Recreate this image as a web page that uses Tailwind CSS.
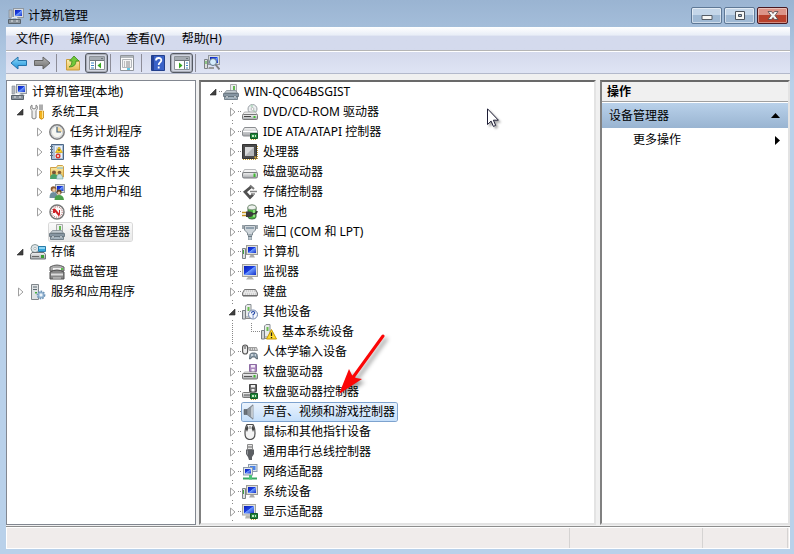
<!DOCTYPE html>
<html lang="zh-CN">
<head>
  <meta charset="UTF-8" />
  <meta name="viewport" content="width=device-width, initial-scale=1.0" />
  <title>计算机管理</title>
  <script src="https://cdn.jsdelivr.net/npm/@tailwindcss/browser@4"></script>
</head>

<body class="h-screen overflow-hidden flex flex-col pl-[6px] pr-1 pb-[5px] bg-[#b9d1ea] bg-linear-to-b from-[#9ab4d2] from-0% to-[#b9d1ea] to-15% font-['Noto_Sans','Noto_Sans_CJK_SC',sans-serif] text-xs text-black">

  <!-- Icons -->
  <svg class="absolute size-0" aria-hidden="true" xmlns="http://www.w3.org/2000/svg">
    <defs>
      <linearGradient id="gScreen" x1="0" y1="0" x2="1" y2="1">
        <stop offset="0" stop-color="#0a1fb8" /><stop offset=".45" stop-color="#1c3fe0" /><stop offset=".5" stop-color="#6f9bff" /><stop offset="1" stop-color="#1330c8" />
      </linearGradient>
      <linearGradient id="gMetal" x1="0" y1="0" x2="0" y2="1">
        <stop offset="0" stop-color="#f4f4f4" /><stop offset="1" stop-color="#a4a7aa" />
      </linearGradient>
      <linearGradient id="gBlue" x1="0" y1="0" x2="0" y2="1">
        <stop offset="0" stop-color="#8fdcfb" /><stop offset="1" stop-color="#1c8fd8" />
      </linearGradient>
      <linearGradient id="gGray" x1="0" y1="0" x2="0" y2="1">
        <stop offset="0" stop-color="#b4b4b4" /><stop offset="1" stop-color="#6f6f6f" />
      </linearGradient>
      <linearGradient id="gFolder" x1="0" y1="0" x2="0" y2="1">
        <stop offset="0" stop-color="#fdf0b0" /><stop offset="1" stop-color="#e8bd55" />
      </linearGradient>
    </defs>

    <!-- tree expanders, with the dotted guide lines of the device tree -->
    <symbol id="exp-closed" viewBox="0 0 19 20"><path d="M7.500 6v8l4.500-4z" fill="#fff" stroke="#a0a0a0" /></symbol>
    <symbol id="exp-open" viewBox="0 0 19 20"><path d="M12 7v6H6z" fill="#404040" stroke="#262626" stroke-width=".6" /></symbol>
    <symbol id="dots-closed" viewBox="0 0 19 20"><path d="M9 1h1v1H9zM9 18h1v1H9zM15 9h1v1h-1zM17 9h1v1h-1z" fill="#888" /><use href="#exp-closed" width="19" height="20" /></symbol>
    <symbol id="dots-open" viewBox="0 0 19 20"><path d="M9 1h1v1H9zM9 18h1v1H9zM15 9h1v1h-1zM17 9h1v1h-1z" fill="#888" /><use href="#exp-open" width="19" height="20" /></symbol>
    <symbol id="dots-root" viewBox="0 0 19 20"><path d="M15 9h1v1h-1zM17 9h1v1h-1z" fill="#888" /><use href="#exp-open" width="19" height="20" /></symbol>
    <symbol id="dots-leaf" viewBox="0 0 38 20"><path d="M9.500 1v19M28.500 1v9M28 9.500h10" fill="none" stroke="#888" stroke-dasharray="1 1" /></symbol>

    <symbol id="i-mgmt" viewBox="0 0 16 16">
      <rect x="5.500" y=".5" width="10" height="9" fill="#d9dde2" stroke="#9098a0" />
      <rect x="7" y="2" width="7" height="6" fill="url(#gScreen)" />
      <path d="M1 2h3v8H1z" fill="#b5bbc2" stroke="#7f868e" stroke-width=".6" />
      <path d="M9 10h3l2 2H7z" fill="#aab0b8" />
      <path d="M.5 11.500h12v4H.5z" fill="#8c959d" stroke="#59636c" />
      <path d="M4 11V9.500h5V11M3 13h2m3 0h2" fill="none" stroke="#e4e8eb" />
    </symbol>
    <symbol id="i-tools" viewBox="0 0 16 16">
      <path d="M2 1v3l2 1 2-1V1c2 1 2 4 0 5.500V14q-2 2-4 0V6.500C0 5 0 2 2 1z" fill="#eee" stroke="#777" stroke-width=".9" />
      <path d="M10 .5V6M12 .5V6" stroke="#777" stroke-width="1.200" />
      <path d="M9.500 7h4v7q-2 2.500-4 0z" fill="#f4b31c" stroke="#bd7d0b" stroke-width=".7" />
      <path d="M12.500 7v7" stroke="#ffe48a" />
    </symbol>
    <symbol id="i-clock" viewBox="0 0 16 16">
      <circle cx="8" cy="8" r="7.200" fill="#e6ecf2" stroke="#7d7d7d" stroke-width="1.500" />
      <circle cx="8" cy="8" r="5.600" fill="#f6f7f2" stroke="#b9b9b9" stroke-width=".6" />
      <path d="M8 8V3a5 5 0 0 1 5 5z" fill="#f3d9a0" />
      <path d="M8 3v5h4" fill="none" stroke="#41617f" stroke-width="1.200" />
    </symbol>
    <symbol id="i-log" viewBox="0 0 16 16">
      <path d="M2.500.5h12v15h-12z" fill="#a9bfd8" stroke="#4d6786" />
      <path d="M6 2h7v12H6z" fill="#eef3f8" />
      <path d="M7 4h5M7 6h5M7 8h5M7 10h5" stroke="#8ea5c0" stroke-width=".7" />
      <path d="M1 2.500h3M1 5.500h3M1 8.500h3M1 11.500h3" stroke="#5c6e80" />
      <path d="M10 3l3.500 5.500h-7z" fill="#ffd21e" stroke="#c49200" stroke-width=".6" /><path d="M10 5v2" stroke="#333" />
      <circle cx="9" cy="12" r="2.500" fill="#d8362c" /><path d="M8 11l2 2m0-2l-2 2" stroke="#fff" stroke-width=".7" />
    </symbol>
    <symbol id="i-share" viewBox="0 0 16 16">
      <path d="M1.500 3.500V13h13V2.500l-1-1h-5l-1 2z" fill="url(#gFolder)" stroke="#cfa146" />
      <path d="M8 4h6" stroke="#6eb4df" />
      <circle cx="5" cy="8.500" r="2" fill="#7b5536" /><path d="M1 15q0-5 4-5t4 5z" fill="#49a069" />
      <circle cx="10.500" cy="8.500" r="1.800" fill="#8a6038" /><path d="M7.500 15q0-5 3-5t3.500 5z" fill="#c8e2e4" stroke="#59928f" stroke-width=".5" />
    </symbol>
    <symbol id="i-users" viewBox="0 0 16 16">
      <rect x="6.500" y=".5" width="9" height="8" fill="#d9dde2" stroke="#9098a0" />
      <rect x="8" y="2" width="6.500" height="5" fill="url(#gScreen)" />
      <circle cx="4.500" cy="5" r="2.800" fill="#8a5a30" /><circle cx="5" cy="6" r="1.700" fill="#f0c8a0" />
      <path d="M.5 14q0-6 4-6t4 6z" fill="#6e8e9d" />
      <circle cx="10" cy="8" r="2.600" fill="#60401f" /><circle cx="10" cy="9" r="1.600" fill="#f0c8a0" />
      <path d="M5.500 16q0-5 4.500-5t5 5z" fill="#4aa04a" />
    </symbol>
    <symbol id="i-perf" viewBox="0 0 16 16">
      <circle cx="8" cy="8" r="7" fill="#fbfbfb" stroke="#777" stroke-width="1.500" />
      <circle cx="8" cy="8" r="5.200" fill="none" stroke="#a03030" stroke-width=".8" stroke-dasharray="1 1" />
      <path d="M5 5v4M5 5l5.500 6.500" fill="none" stroke="#cf1f25" stroke-width="2" /><path d="M10.500 6v4" stroke="#cf1f25" />
    </symbol>
    <symbol id="i-devmgr" viewBox="0 0 16 16">
      <path d="M7.500.5h6v9h-6z" fill="#eceeee" stroke="#aaa" />
      <path d="M10 2h2v4h-2z" fill="#65b952" />
      <path d="M1.500 9l2-2.500h9l2 2.500z" fill="#c4ccd2" stroke="#77828a" stroke-width=".7" />
      <path d="M.5 9.500h15v3H.5z" fill="#8796a2" stroke="#5f6d77" stroke-width=".8" />
      <path d="M1.500 12.500h13v3h-13z" fill="#a5b4bf" stroke="#5f6d77" stroke-width=".8" />
      <path d="M3 12h2v2H3zM11 12h2v2h-2z" fill="#e6ecef" stroke="#59656e" stroke-width=".4" />
    </symbol>
    <symbol id="i-storage" viewBox="0 0 16 16">
      <circle cx="5" cy="4.500" r="4" fill="#dfe6ea" stroke="#899" /><circle cx="5" cy="4.500" r="1.200" fill="#fff" stroke="#899" stroke-width=".6" />
      <path d="M8.500 2.500h7v5h-7z" fill="#36a8dd" stroke="#277ba8" /><path d="M9 3h6v2H9z" fill="#8cd3f3" />
      <path d="M.5 10.500l1.500-2h12l1.500 2V15H.5z" fill="url(#gMetal)" stroke="#6f7478" />
      <path d="M11 11h3v3h-3z" fill="#39a035" /><path d="M2 12.500h7" stroke="#666" />
    </symbol>
    <symbol id="i-disk" viewBox="0 0 16 16">
      <path d="M1 3q7-4 14 0v4H1z" fill="#aaa" stroke="#606060" /><path d="M4 5h8" stroke="#eee" stroke-width="2" />
      <path d="M1 8q7-4 14 0v7H1z" fill="#888" stroke="#505050" /><path d="M2 10.500h12" stroke="#ddd" stroke-width="2" />
      <path d="M12 4h2v2h-2z" fill="#5bc24c" /><path d="M4 14h8" stroke="#d5d5d5" />
    </symbol>
    <symbol id="i-services" viewBox="0 0 16 16">
      <path d="M1.500.5h7v15h-7z" fill="#dfe2e4" stroke="#81878c" />
      <path d="M3 3h4M3 5.500h4" stroke="#5c6a72" /><path d="M5 8h2v1.500H5z" fill="#44ac3e" />
      <circle cx="11" cy="11" r="3.500" fill="#aac7e0" stroke="#6e94b7" stroke-width="1.800" stroke-dasharray="1.600 1" />
      <circle cx="11" cy="11" r="2.600" fill="#bcd4e8" stroke="#6e94b7" stroke-width=".6" /><circle cx="11" cy="11" r="1" fill="#fff" />
    </symbol>
    <symbol id="i-drive" viewBox="0 0 16 16">
      <path d="M.5 9l2-3.500h11L15.500 9z" fill="#f3f3f3" stroke="#a9abad" stroke-width=".8" />
      <rect x=".5" y="8.500" width="15" height="5.500" rx="1.500" fill="url(#gMetal)" stroke="#7a7d80" />
      <path d="M11.500 9.500h2v3.500h-2z" fill="#3fba31" />
    </symbol>
    <symbol id="i-dvd" viewBox="0 0 16 16">
      <circle cx="10.500" cy="5" r="4.500" fill="#eceff1" stroke="#9aa0a5" />
      <path d="M10.500 5L8 1.500l3-1zM10.500 5l3.500 2-2 2z" fill="#b9d9c4" /><circle cx="10.500" cy="5" r="1.400" fill="#fff" stroke="#999" stroke-width=".6" />
      <path d="M.5 11l2-3h11l2 3z" fill="#ededed" stroke="#999" stroke-width=".7" />
      <rect x=".5" y="10.500" width="15" height="5" rx="1" fill="url(#gMetal)" stroke="#777" />
      <path d="M2 12.500h7" stroke="#444" /><path d="M11.500 12h2v2h-2z" fill="#3fba31" />
    </symbol>
    <symbol id="i-chip" viewBox="0 0 16 16">
      <path d="M8.500 9.500h7v5h-7z" fill="#23873b" stroke="#125a25" /><path d="M10 11h2v2h-2zM13 11h1v2h-1z" fill="#c3e8c5" /><path d="M9 15.500h6" stroke="#c9a82d" stroke-dasharray="1 1" />
    </symbol>
    <symbol id="i-ide" viewBox="0 0 16 16">
      <path d="M.5 7l2-3.500h11l2 3.500v4q0 1-1.500 1H2q-1.500 0-1.500-1z" fill="url(#gMetal)" stroke="#8a8d90" /><path d="M1 7.500h14" stroke="#fff" />
      <use href="#i-chip" width="16" height="16" />
    </symbol>
    <symbol id="i-cpu" viewBox="0 0 16 16">
      <path d="M1 15.300h14M15.300 2v13" stroke="#c29a2b" stroke-width="1.400" stroke-dasharray="1 1" />
      <path d="M.5.500h14v14H.5z" fill="#4a4a4a" stroke="#333" /><path d="M3 3h9v9H3z" fill="#b5b7b9" /><path d="M3 3h9l-9 9z" fill="#d9dadb" />
      <path d="M12.500 12.500h2v2h-2z" fill="#d9a72d" />
    </symbol>
    <symbol id="i-ctrl" viewBox="0 0 16 16">
      <path d="M9.500 2.500L3 8l5 5.500 3-3" fill="none" stroke="#505050" stroke-width="2.800" />
      <path d="M8 1.500l4 3.500" stroke="#777" stroke-width="2" /><path d="M8 7.500h7M9 10h4" stroke="#858585" stroke-width="1.500" />
    </symbol>
    <symbol id="i-battery" viewBox="0 0 16 16">
      <path d="M6 3q0-2 4-2t4 2v10q0 2-4 2t-4-2z" fill="#48b83d" stroke="#456b45" />
      <path d="M6 3q0-2 4-2t4 2v2q-4 1.500-8 0z" fill="#edf2ed" stroke="#7c8b7c" stroke-width=".7" /><path d="M12 6v7" stroke="#a7ee93" stroke-width="1.500" />
      <path d="M4 7.500h4q3 0 3 2.500t-3 3H4z" fill="#3c3c3c" /><path d="M0 8.500h4M0 11.500h4" stroke="#c39322" stroke-width="1.500" /><path d="M10 10q5 0 5-3" fill="none" stroke="#333" stroke-width="1.500" />
    </symbol>
    <symbol id="i-port" viewBox="0 0 16 16">
      <path d="M2.500 1.500h11V6l-3 3v2h-5V9l-3-3z" fill="#ced5da" stroke="#7f8a92" /><path d="M4 3h8v2H4z" fill="#8fa0ad" />
      <path d="M1 1v4M15 1v4" stroke="#7f8a92" stroke-width="1.500" /><path d="M6.500 11h3v5h-3z" fill="#bcc6cd" stroke="#84929b" stroke-width=".7" /><path d="M6 12.500h4" stroke="#6c7a84" />
    </symbol>
    <symbol id="i-computer" viewBox="0 0 16 16">
      <path d="M.5 4.500h3v10h-3z" fill="#dde0e2" stroke="#7c8286" /><path d="M1.500 6v4" stroke="#44a43d" />
      <rect x="4.500" y="1.500" width="11" height="9" fill="#dfdfdb" stroke="#9c9c98" /><rect x="6" y="3" width="8" height="6" fill="url(#gScreen)" />
      <path d="M8.500 11h3l1.500 2.500H7z" fill="#aaa" />
    </symbol>
    <symbol id="i-monitor" viewBox="0 0 16 16">
      <rect x=".5" y=".5" width="15" height="12" fill="#e1e1dc" stroke="#a5a5a0" /><rect x="2" y="2" width="12" height="9" fill="url(#gScreen)" />
      <path d="M6 13h4l2 2.500H4z" fill="#b5b5b0" />
    </symbol>
    <symbol id="i-keyboard" viewBox="0 0 16 16">
      <path d="M2.500 5.500h11l2 3.500v2.500H.5V9z" fill="#cfcfcf" stroke="#777" stroke-linejoin="round" />
      <path d="M3 7h10M2.500 8.500h11M2 10h12" stroke="#fff" stroke-dasharray="1 1" /><path d="M1 12h14" stroke="#666" />
    </symbol>
    <symbol id="i-box" viewBox="0 0 16 16">
      <path d="M3.500 2l1.500-1.500h4V13H3.500z" fill="#e9ebec" stroke="#888e92" /><path d="M5.500 3h2v4h-2z" fill="#69bd50" />
      <path d="M.5 6.500h3V15h-3z" fill="#cfd3d6" stroke="#777d82" /><path d="M3 14.500h7" stroke="#888" />
    </symbol>
    <symbol id="i-other" viewBox="0 0 16 16">
      <use href="#i-box" width="16" height="16" />
      <circle cx="11" cy="10.500" r="4.500" fill="#f5f8fd" stroke="#6d82ab" /><path d="M9.500 9.200q0-1.700 1.600-1.700t1.500 1.500q0 .8-1.500 1.600v1m0 1v1" fill="none" stroke="#2549a8" stroke-width="1.200" />
    </symbol>
    <symbol id="i-warn" viewBox="0 0 16 16">
      <use href="#i-box" width="16" height="16" />
      <path d="M10.500 5.500L15.500 15h-10z" fill="#ffdc2e" stroke="#c79a08" stroke-linejoin="round" /><path d="M10.500 8.500v3.500m0 1v1.200" stroke="#222" stroke-width="1.300" />
    </symbol>
    <symbol id="i-hid" viewBox="0 0 16 16">
      <rect x=".6" y="1" width="5" height="9" rx="2.500" fill="#eee" stroke="#555" stroke-width="1.200" /><path d="M3 2v3" stroke="#444" />
      <path d="M6.500 3.500h8l1 3h-8z" fill="#d8d8d8" stroke="#888" stroke-width=".8" /><path d="M8 5h6" stroke="#666" stroke-dasharray="1 1" />
      <path d="M7.500 15q0-6 2-6h4q2 0 2 6-2 0-2.500-2h-3q-.5 2-2.500 2z" fill="#8fa1af" stroke="#47555f" stroke-width=".8" /><path d="M9 11h2m2 0h1" stroke="#fff" />
    </symbol>
    <symbol id="i-floppy" viewBox="0 0 16 16">
      <path d="M7.500.5h7v7h-7z" fill="#a987bd" stroke="#8c6ba3" /><path d="M9 1h4v2.500H9zM9.500 5h3v2.500h-3z" fill="#f2eaf6" />
      <path d="M.5 11l2-3h11l2 3z" fill="#ededed" stroke="#999" stroke-width=".7" />
      <rect x=".5" y="9.500" width="15" height="5.500" rx="1" fill="url(#gMetal)" stroke="#777" /><path d="M2 12.500h8" stroke="#555" /><path d="M11.500 11h2v2.500h-2z" fill="#3fba31" />
    </symbol>
    <symbol id="i-floppyctl" viewBox="0 0 16 16">
      <path d="M7.500.5h7v7h-7z" fill="#6c6c6c" stroke="#444" /><path d="M9 1h4v2.500H9zM9.500 5h3v2.500h-3z" fill="#eee" />
      <rect x=".5" y="8.500" width="14" height="5" rx="1" fill="url(#gMetal)" stroke="#777" /><path d="M2 11h6" stroke="#555" />
      <use href="#i-chip" width="16" height="16" />
    </symbol>
    <symbol id="i-sound" viewBox="0 0 16 16">
      <path d="M2 5.500h3v5H2z" fill="#6c7379" stroke="#555c62" stroke-width=".6" /><path d="M5 5.500L11 .8v14.400L5 10.500z" fill="#8d959c" stroke="#646c73" stroke-width=".6" />
      <path d="M9 3.500l2-2v13l-2-2z" fill="#c2c9cf" />
    </symbol>
    <symbol id="i-mouse" viewBox="0 0 16 16">
      <path d="M5 .5h6q2 3 2 9 0 6-5 6t-5-6q0-6 2-9z" fill="#f3f3f3" stroke="#4d4d4d" stroke-width="1.200" />
      <path d="M3.700 5L5 1l1.500 3L5 8zM12.300 5L11 1 9.500 4 11 8z" fill="#444" /><path d="M7.500 2h1v3h-1z" fill="#777" />
    </symbol>
    <symbol id="i-usb" viewBox="0 0 16 16">
      <path d="M5.500.5h5v5h-5z" fill="#e4e4e4" stroke="#8a8a8a" /><path d="M7 2v2M9 2v2" stroke="#666" />
      <path d="M4 5.500h8V10l-2 3v3H7l-1-3-2-3z" fill="#5c5f63" /><path d="M5.500 6.500v4" stroke="#96999c" />
    </symbol>
    <symbol id="i-net" viewBox="0 0 16 16">
      <rect x="6.500" y=".5" width="8.500" height="7" fill="#dde6ef" stroke="#8c9bab" /><rect x="8" y="2" width="5.500" height="4" fill="#4a83ea" />
      <rect x="1.500" y="3.500" width="9" height="7.500" fill="#e3e6e8" stroke="#8c9bab" /><rect x="3" y="5" width="6" height="4.500" fill="url(#gScreen)" />
      <path d="M1 14.500h14" stroke="#38a862" stroke-width="2" /><path d="M7 11h3v4.500H7z" fill="#4cc478" />
    </symbol>
    <symbol id="i-display" viewBox="0 0 16 16">
      <rect x=".5" y=".5" width="13" height="10.500" fill="#e1e1dc" stroke="#a5a5a0" /><rect x="2" y="2" width="10" height="7.500" fill="url(#gScreen)" />
      <path d="M4 11.500h4v3H3z" fill="#b5b5b0" /><use href="#i-chip" width="16" height="16" />
    </symbol>
  </svg>

  <!-- Title bar -->
  <header class="h-[27px] shrink-0 flex items-center pr-[2px]">
    <svg class="size-4 ml-[2px] mt-1"><use href="#i-mgmt" /></svg>
    <h1 class="ml-1 mt-1 flex-1">计算机管理</h1>
    <div class="flex gap-[2px] mt-1">
      <button aria-label="最小化" class="w-[31px] h-[17px] rounded-[2px] border border-[#5e7896] inset-ring inset-ring-white/50 bg-linear-to-b from-[#c4d6e9] from-50% to-[#9fb9d4] to-50% flex items-center justify-center">
        <svg class="w-3 h-3" viewBox="0 0 12 12"><path d="M1 5.500h10v4H1z" fill="#f7f7f5" stroke="#565d66" /></svg>
      </button>
      <button aria-label="最大化" class="w-[31px] h-[17px] rounded-[2px] border border-[#5e7896] inset-ring inset-ring-white/50 bg-linear-to-b from-[#c4d6e9] from-50% to-[#9fb9d4] to-50% flex items-center justify-center">
        <svg class="w-3 h-3" viewBox="0 0 12 12"><path fill-rule="evenodd" d="M1.500 1.500h9v8h-9zM4.500 4.500v2h3v-2z" fill="#f7f7f5" stroke="#4b525b" /></svg>
      </button>
      <button aria-label="关闭" class="w-[31px] h-[17px] rounded-[2px] border border-[#481820] inset-ring inset-ring-white/40 bg-linear-to-b from-[#dc9488] from-50% to-[#b8412c] to-50% flex items-center justify-center">
        <svg class="w-3 h-3" viewBox="0 0 12 12"><path d="M1 1.500h3.500L6 3.500l1.500-2H11L8 5.500l3 4H7.500L6 7.500l-1.500 2H1l3-4z" fill="#f7f7f5" stroke="#51464a" stroke-width=".8" /></svg>
      </button>
    </div>
  </header>

  <div class="flex-1 min-h-0 flex flex-col bg-[#f0f0f0]">
    <nav class="h-6 shrink-0 flex items-center pl-[2px] gap-px border-b border-[#b5b5b5] bg-linear-to-b from-white from-0% via-[#e9eef7] via-35% to-[#d4daed] to-40%">
      <button class="px-2">文件(F)</button>
      <button class="px-2">操作(A)</button>
      <button class="px-2">查看(V)</button>
      <button class="px-2">帮助(H)</button>
    </nav>

    <!-- Toolbar -->
    <div class="h-[23px] shrink-0 flex items-center pl-1 border-t border-t-white border-b border-b-[#b3b9cb] bg-linear-to-b from-[#d4d9ec] to-[#dfe4f4]">
      <button aria-label="后退" class="mr-[5px]"><svg class="w-[18px] h-4" viewBox="0 0 18 16"><path d="M1 8l7-6v3.500h8.500v5H8V14z" fill="url(#gBlue)" stroke="#2371aa" stroke-linejoin="round" /></svg></button>
      <button aria-label="前进" class="mr-[5px]"><svg class="w-[18px] h-4" viewBox="0 0 18 16"><path d="M17 8l-7-6v3.500H1.500v5H10V14z" fill="url(#gGray)" stroke="#656565" stroke-linejoin="round" /></svg></button>
      <span class="w-px h-[18px] bg-[#8d8d98] mr-2"></span>
      <button aria-label="向上一级" class="mr-1"><svg class="size-4" viewBox="0 0 16 16"><path d="M1.500 4.500h5l1 1.500h7v9h-13z" fill="url(#gFolder)" stroke="#c99c3d" /><path d="M4 12q3-1 3-6H4.500L9 1l5 5h-3q0 6-7 6z" fill="#72c83b" stroke="#3d8a1d" stroke-width=".8" /></svg></button>
      <button aria-label="显示/隐藏控制台树" aria-pressed="true" class="w-[23px] h-5 mr-[2px] rounded-[3px] border border-[#555a63] inset-ring inset-ring-[#a9adb8] bg-[#d1d5e0] flex items-center justify-center">
        <svg class="size-4" viewBox="0 0 16 16"><path d="M.5 1.500h15v13H.5z" fill="#fff" stroke="#8d9298" /><path d="M1 2h14v3H1z" fill="#a5abb2" /><path d="M12 3.500h2M1 5.500h14M6.500 6v8" stroke="#6e757c" /><path d="M2 8h3M2 10.500h3M2 13h3" stroke="#3d82c5" /><path d="M12 7.500v6L8.500 10.500z" fill="#35a81f" /></svg>
      </button>
      <span class="w-px h-[18px] bg-[#8d8d98] mr-2"></span>
      <button aria-label="属性" class="mr-[6px]"><svg class="size-4" viewBox="0 0 16 16"><path d="M1.500.5h13v15h-13z" fill="#fcfcfc" stroke="#8f949a" /><path d="M2 2h12" stroke="#b2b7bc" stroke-width="2" /><path d="M3.500 4.500h9v8h-9z" fill="#f4f4f4" stroke="#b3b6ba" /><path d="M5 7h1m1 0h4M5 9h1m1 0h4M5 11h1m1 0h4" stroke="#888" /><path d="M8 14h3" stroke="#32b5d9" stroke-width="1.500" /></svg></button>
      <span class="w-px h-[18px] bg-[#8d8d98] mr-2"></span>
      <button aria-label="帮助" class="mr-1"><svg class="size-4" viewBox="0 0 16 16"><path d="M1.500.5h13v15h-13z" fill="#3a62c8" stroke="#23408c" /><path d="M2 1h2v14H2z" fill="#24439b" /><path d="M6 5.500q0-2.500 2.700-2.500t2.600 2.300q0 1.300-1.300 2.200T8.700 10m0 1.500v2" fill="none" stroke="#fff" stroke-width="1.800" /></svg></button>
      <button aria-label="显示/隐藏操作窗格" aria-pressed="true" class="w-[23px] h-5 mr-[2px] rounded-[3px] border border-[#555a63] inset-ring inset-ring-[#a9adb8] bg-[#d1d5e0] flex items-center justify-center">
        <svg class="size-4" viewBox="0 0 16 16"><path d="M.5 1.500h15v13H.5z" fill="#fff" stroke="#8d9298" /><path d="M1 2h14v3H1z" fill="#a5abb2" /><path d="M12 3.500h2M1 5.500h14M10.500 6v8" stroke="#6e757c" /><path d="M12 8h2M12 10.500h2M12 13h2" stroke="#3d82c5" /><path d="M5 7.500v6l3.500-3z" fill="#35a81f" /></svg>
      </button>
      <span class="w-px h-[18px] bg-[#8d8d98] mr-2"></span>
      <button aria-label="扫描检测硬件改动"><svg class="size-4" viewBox="0 0 16 16"><rect x="4.500" y=".5" width="11" height="9" fill="#d8dcdf" stroke="#92989e" /><rect x="6" y="2" width="8" height="6" fill="url(#gScreen)" /><path d="M.5 4.500h3v9h-3z" fill="#ddd" stroke="#7b8085" /><path d="M2 6v3" stroke="#3fae33" /><path d="M5 12h5v2H4z" fill="#999" /><circle cx="9" cy="7" r="3.500" fill="#d7edfc" stroke="#61768a" /><path d="M11.500 9.500l4 5" stroke="#7d7f84" stroke-width="2" /></svg></button>
    </div>

    <main class="flex-1 min-h-0 flex pt-[6px] pb-px border-b border-[#8d8d8d]">
      <section class="w-[190px] shrink-0 mr-[3px] border border-[#828790] bg-white pt-px">
        <ul id="consoleTree" class="pl-px"></ul>
      </section>

      <section class="relative flex-1 min-w-0 mr-1 border-2 border-t-[#696969] border-l-[#808080] border-r-[#e3e3e3] border-b-[#e3e3e3] bg-white">
        <ul id="deviceTree"></ul>

        <!-- red arrow and mouse pointer lie over the list -->
        <svg class="absolute left-[136px] top-[248px] w-[54px] h-[70px] drop-shadow-[3px_3px_2px_rgb(0_0_0/0.4)] pointer-events-none" viewBox="0 0 54 70">
          <path d="M46 6L17 46" stroke="#fb0606" stroke-width="3" stroke-linecap="round" />
          <path d="M2 64L12 39l3 6 4 3 6 1z" fill="#fb0606" />
        </svg>
        <svg class="absolute left-[286px] top-[26px] w-3 h-[19px] drop-shadow-[2px_2px_1px_rgb(0_0_0/0.35)] pointer-events-none" viewBox="0 0 12 19">
          <path d="M.5.800v15.700l3.600-3.400 2.300 5.300 2.300-1-2.300-5.200h5z" fill="#fff" stroke="#1d1d35" />
        </svg>
      </section>

      <aside class="w-[190px] shrink-0 border-2 border-t-[#696969] border-l-[#808080] border-r-[#e3e3e3] border-b-[#e3e3e3] bg-white">
        <h2 class="h-5 flex items-center pl-[5px] pt-px font-bold bg-[#f0f0f0] border-b border-[#a0a0a0]">操作</h2>
        <button class="w-full h-[25px] mt-px flex items-center justify-between pl-[7px] pr-2 bg-linear-to-b from-[#b9d1ea] to-[#99b4d1]">
          设备管理器
          <svg class="w-[9px] h-[5px]" viewBox="0 0 9 5"><path d="M4.500 0L9 5H0z" /></svg>
        </button>
        <button class="w-full h-6 flex items-center justify-between pl-[31px] pr-2">
          更多操作
          <svg class="w-[5px] h-[9px]" viewBox="0 0 5 9"><path d="M0 0l5 4.500L0 9z" /></svg>
        </button>
      </aside>
    </main>

    <footer class="h-[22px] shrink-0 flex border border-white bg-[#f0eceb]">
      <div class="flex-1 border-r border-[#d5d3d2]"></div>
      <div class="w-[133px] border-r border-[#d5d3d2]"></div>
      <div class="w-[85px] mr-px border-r border-[#d5d3d2]"></div>
    </footer>
  </div>

  <script>
    // [level, expander, icon, label, state]
    const consoleItems = [
      [0, "", "mgmt", "计算机管理(本地)"],
      [1, "exp-open", "tools", "系统工具"],
      [2, "exp-closed", "clock", "任务计划程序"],
      [2, "exp-closed", "log", "事件查看器"],
      [2, "exp-closed", "share", "共享文件夹"],
      [2, "exp-closed", "users", "本地用户和组"],
      [2, "exp-closed", "perf", "性能"],
      [2, "exp-none", "devmgr", "设备管理器", "current"],
      [1, "exp-open", "storage", "存储"],
      [2, "exp-none", "disk", "磁盘管理"],
      [1, "exp-closed", "services", "服务和应用程序"],
    ];

    const deviceItems = [
      [1, "dots-root", "devmgr", "WIN-QC064BSGIST"],
      [2, "dots-closed", "dvd", "DVD/CD-ROM 驱动器"],
      [2, "dots-closed", "ide", "IDE ATA/ATAPI 控制器"],
      [2, "dots-closed", "cpu", "处理器"],
      [2, "dots-closed", "drive", "磁盘驱动器"],
      [2, "dots-closed", "ctrl", "存储控制器"],
      [2, "dots-closed", "battery", "电池"],
      [2, "dots-closed", "port", "端口 (COM 和 LPT)"],
      [2, "dots-closed", "computer", "计算机"],
      [2, "dots-closed", "monitor", "监视器"],
      [2, "dots-closed", "keyboard", "键盘"],
      [2, "dots-open", "other", "其他设备"],
      [2, "dots-leaf", "warn", "基本系统设备"],
      [2, "dots-closed", "hid", "人体学输入设备"],
      [2, "dots-closed", "floppy", "软盘驱动器"],
      [2, "dots-closed", "floppyctl", "软盘驱动器控制器"],
      [2, "dots-closed", "sound", "声音、视频和游戏控制器", "selected"],
      [2, "dots-closed", "mouse", "鼠标和其他指针设备"],
      [2, "dots-closed", "usb", "通用串行总线控制器"],
      [2, "dots-closed", "net", "网络适配器"],
      [2, "dots-closed", "computer", "系统设备"],
      [2, "dots-closed", "display", "显示适配器"],
    ];

    const indent = ["pl-[3px]", "pl-[3px]", "pl-[22px]"];
    const itemState = {
      current: "bg-linear-to-b from-[#fafafa] to-[#e8e8e8] ring-1 ring-[#d9d9d9]",
      selected: "bg-linear-to-b from-[#eaf3fd] to-[#c5dffa] ring-1 ring-[#7da2ce]",
    };

    function fillTree(id, items) {
      document.getElementById(id).innerHTML = items.map(([level, expander, icon, label, state]) => {
        const width = expander === "dots-leaf" ? "w-[38px]" : "w-[19px]";
        const box = level === 0 ? "" : `<svg class="${width} h-5 shrink-0"><use href="#${expander}" /></svg>`;
        return `
          <li class="h-5 flex items-center whitespace-nowrap ${indent[level]}">
            ${box}
            <button class="h-[18px] flex items-center gap-[5px] pr-[2px] rounded-[2px] ${itemState[state] || ""}">
              <svg class="size-4 shrink-0"><use href="#i-${icon}" /></svg>
              <span>${label}</span>
            </button>
          </li>`;
      }).join("");
    }

    fillTree("consoleTree", consoleItems);
    fillTree("deviceTree", deviceItems);
  </script>
</body>
</html>
